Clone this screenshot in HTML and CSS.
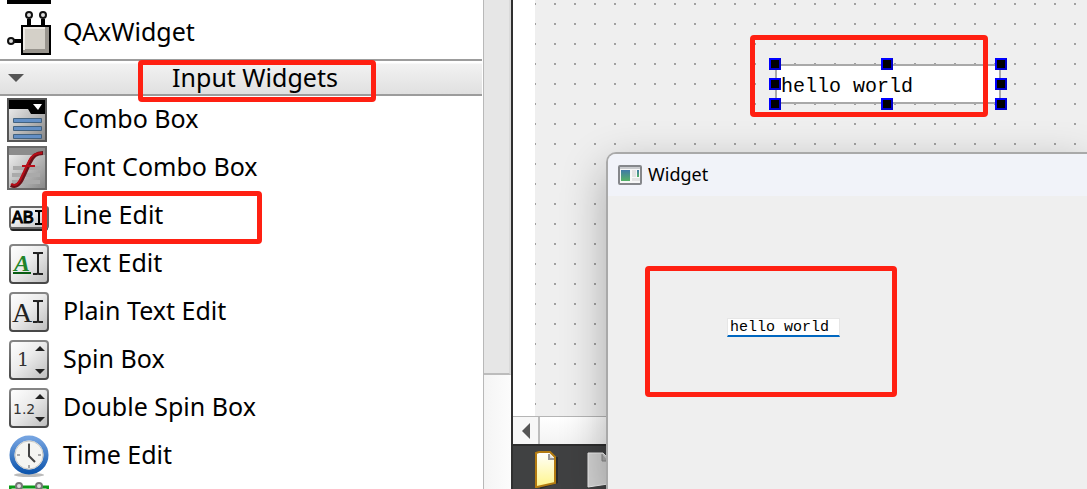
FILE: index.html
```html
<!DOCTYPE html>
<html lang="en">
<head>
<meta charset="utf-8">
<title>Widget designer</title>
<link rel="stylesheet" href="styles.css">
</head>
<body>
<svg class="defs" width="0" height="0" aria-hidden="true">
  <defs>
    <linearGradient id="tile" x1="0" y1="0" x2="1" y2="1"><stop offset="0" stop-color="#fff"/><stop offset=".45" stop-color="#ececec"/><stop offset="1" stop-color="#bcbcbc"/></linearGradient>
    <linearGradient id="edge" x1="0" y1="0" x2="0" y2="1"><stop offset="0" stop-color="#858585"/><stop offset="1" stop-color="#484848"/></linearGradient>
    <linearGradient id="panel" x1="0" y1="0" x2="1" y2="1"><stop offset="0" stop-color="#f8f8f8"/><stop offset="1" stop-color="#858585"/></linearGradient>
    <linearGradient id="ring" x1="0" y1="0" x2="0" y2="1"><stop offset="0" stop-color="#74a3e0"/><stop offset="1" stop-color="#1057ae"/></linearGradient>
    <linearGradient id="paper" x1="0" y1="0" x2="0" y2="1"><stop offset="0" stop-color="#fff"/><stop offset="1" stop-color="#fff58a"/></linearGradient>
    <linearGradient id="pane" x1="0" y1="0" x2="0" y2="1"><stop offset="0" stop-color="#3f79a8"/><stop offset="1" stop-color="#55b265"/></linearGradient>
  </defs>
</svg>
<div class="designer">
  <aside class="widget-box">
    <nav class="list">
      <button class="item item-cut" type="button" aria-label="Previous widget">
        <svg class="icon" width="44" height="4"><rect width="44" height="4"/></svg>
      </button>
      <button class="item" type="button">
        <svg class="icon" width="44" height="44" viewBox="0 0 44 44">
          <path d="M22 8v8M36 8v8M7 30h8" stroke="#000" stroke-width="4"/>
          <g fill="#ddd" stroke="#111" stroke-width="2"><circle cx="22" cy="4" r="3"/><circle cx="36" cy="4" r="3"/><circle cx="4" cy="30" r="3"/></g>
          <rect x="15" y="15" width="28" height="28" fill="#d4d0c8" stroke="#000" stroke-width="2"/>
          <path d="M16 40h24V16" fill="none" stroke="#99958e" stroke-width="4"/>
          <path d="M17 39V17h21" fill="none" stroke="#eeeae5" stroke-width="2"/>
        </svg>
        <span>QAxWidget</span>
      </button>
      <button class="category" type="button" aria-expanded="true">
        <svg class="chevron" width="16" height="8"><path d="M0 0h16L8 8z" fill="#555"/></svg>
        <span>Input Widgets</span>
      </button>
      <button class="item" type="button">
        <svg class="icon" width="44" height="44" viewBox="0 0 44 44">
          <rect x="1" y="1" width="38" height="42" fill="url(#panel)" stroke="#555" stroke-width="2"/>
          <path d="M2 2h36v14H24l-3-5H2z"/><path d="M26 6h9l-4 6z" fill="#fff"/>
          <g fill="#638fc5" stroke="#43627f"><path d="M6.500 20.500h28v4h-28zM6.500 28.500h28v4h-28zM6.500 36.500h28v4h-28z"/></g>
        </svg>
        <span>Combo Box</span>
      </button>
      <button class="item" type="button">
        <svg class="icon" width="44" height="44" viewBox="0 0 44 44">
          <rect x="1" y="1" width="38" height="42" fill="url(#panel)" stroke="#686868" stroke-width="2"/>
          <path d="M2 2h36v7H2z" fill="#8c8c8c"/>
          <path d="M6 22h28M5 29h28M5 36h28" stroke="#aaa" stroke-width="4"/>
          <path d="M4 39c5 3 9-1 12-8l7-15c3-6 6-9 13-9" fill="none" stroke="#6c1118" stroke-width="4"/>
          <path d="M4 38c5 3 8-1 11-8l7-15c3-6 6-8 13-8M15 20h13" fill="none" stroke="#b80e19" stroke-width="2"/>
        </svg>
        <span>Font Combo Box</span>
      </button>
      <button class="item" type="button">
        <svg class="icon tile" width="40" height="44" viewBox="0 0 40 44">
          <rect x="1" y="17" width="38" height="20" rx="3" fill="#222"/>
          <rect x="1" y="13" width="38" height="21" rx="2" fill="url(#tile)" stroke="#666" stroke-width="2"/>
          <text x="3" y="29" class="glyph-pixel">AB</text>
          <path d="M26 17h3l1 1 1-1h3M30 18v11M26 30h3l1-1 1 1h3" fill="none" stroke="#000" stroke-width="2"/>
        </svg>
        <span>Line Edit</span>
      </button>
      <button class="item" type="button">
        <svg class="icon tile" width="40" height="40" viewBox="0 0 40 40">
          <rect x="1" y="1" width="38" height="38" rx="3" fill="url(#tile)" stroke="url(#edge)" stroke-width="2"/>
          <text x="5" y="27" class="glyph-rich">A</text>
          <path d="M4 29h18" stroke="#075c12" stroke-width="2"/>
          <path d="M24 9h4l1 1 1-1h4M29 10v19M24 30h4l1-1 1 1h4" fill="none" stroke="#222" stroke-width="2"/>
        </svg>
        <span>Text Edit</span>
      </button>
      <button class="item" type="button">
        <svg class="icon tile" width="40" height="40" viewBox="0 0 40 40">
          <rect x="1" y="1" width="38" height="38" rx="3" fill="url(#tile)" stroke="url(#edge)" stroke-width="2"/>
          <text x="3" y="30" class="glyph-plain">A</text>
          <path d="M24 9h4l1 1 1-1h4M29 10v19M24 30h4l1-1 1 1h4" fill="none" stroke="#222" stroke-width="2"/>
        </svg>
        <span>Plain Text Edit</span>
      </button>
      <button class="item" type="button">
        <svg class="icon tile" width="40" height="40" viewBox="0 0 40 40">
          <rect x="1" y="1" width="38" height="38" rx="3" fill="url(#tile)" stroke="url(#edge)" stroke-width="2"/>
          <text x="8" y="26" class="glyph-number">1</text>
          <path d="M26 11l5-5 5 5zM26 29h10l-5 5z" fill="#222"/>
        </svg>
        <span>Spin Box</span>
      </button>
      <button class="item" type="button">
        <svg class="icon tile" width="40" height="40" viewBox="0 0 40 40">
          <rect x="1" y="1" width="38" height="38" rx="3" fill="url(#tile)" stroke="url(#edge)" stroke-width="2"/>
          <text x="4" y="26" class="glyph-decimal">1.2</text>
          <path d="M26 11l5-5 5 5zM26 29h10l-5 5z" fill="#222"/>
        </svg>
        <span>Double Spin Box</span>
      </button>
      <button class="item" type="button">
        <svg class="icon tile" width="40" height="44" viewBox="0 0 40 44">
          <ellipse cx="20" cy="41" rx="15" ry="2" fill="#bbb"/>
          <circle cx="20" cy="21" r="17" fill="#f5f5f2" stroke="url(#ring)" stroke-width="5"/>
          <circle cx="20" cy="21" r="14" fill="none" stroke="#c8c8c4"/>
          <path d="M20 9v3M20 31v3M8 21h3M29 21h3" stroke="#aaa" stroke-width="2"/>
          <path d="M20 10v12l6 6" fill="none" stroke="#444" stroke-width="2"/>
        </svg>
        <span>Time Edit</span>
      </button>
      <button class="item item-next" type="button" aria-label="Next widget">
        <svg class="icon tile" width="40" height="40" viewBox="0 0 40 40">
          <rect x="1" y="5" width="38" height="34" fill="#fff" stroke="#0a9a16" stroke-width="3"/>
          <g fill="#ddd" stroke="#777" stroke-width="2"><circle cx="10" cy="4" r="3"/><circle cx="30" cy="4" r="3"/></g>
        </svg>
      </button>
    </nav>
    <div class="vscroll"><div class="thumb"></div></div>
    <div class="mark mark-category"></div>
    <div class="mark mark-line-edit"></div>
  </aside>
  <main class="editor">
    <section class="form">
      <div class="selection">
        <input class="form-input" type="text" value="hello world" aria-label="Line edit">
        <i class="handle top left"></i><i class="handle top center"></i><i class="handle top right"></i>
        <i class="handle middle left"></i><i class="handle middle right"></i>
        <i class="handle bottom left"></i><i class="handle bottom center"></i><i class="handle bottom right"></i>
      </div>
      <div class="mark mark-selection"></div>
    </section>
    <div class="hscroll">
      <button class="scroll-left" type="button" aria-label="Scroll left"><svg width="8" height="16"><path d="M8 0v16L0 8z" fill="#555"/></svg></button>
      <div class="track"></div>
    </div>
    <footer class="toolbar">
      <svg width="24" height="38" viewBox="0 0 24 38"><path d="M6 6h17v26L5 38z" fill="#292a2b"/><path d="M1 2l3-1h11l5 5v26L2 36H1z" fill="url(#paper)" stroke="#b37b10" stroke-width="2"/><path d="M14 3v5h5" fill="#ddd" stroke="#999" stroke-width="2"/></svg>
      <svg width="24" height="38" viewBox="0 0 24 38"><path d="M1 2h15l5 5v26L1 36z" fill="#d2d2d2" stroke="#eee"/><path d="M15 3v7h6" fill="#aaa" stroke="#888"/></svg>
    </footer>
    <section class="preview">
      <header class="titlebar">
        <svg width="24" height="20" viewBox="0 0 24 20"><rect x="1" y="1" width="22" height="18" rx="1" fill="#f7f7f7" stroke="#85878b" stroke-width="2"/><path d="M2 3h20" stroke="#c9cbce" stroke-width="2"/><path d="M3 5h9v11H3z" fill="url(#pane)"/><path d="M14 5h4v7h-4zM14 13h8v3h-8z" fill="#e3e3e3"/><path d="M19 5h2v7h-2z" fill="url(#pane)"/></svg>
        <span>Widget</span>
      </header>
      <div class="preview-body">
        <input class="preview-input" type="text" value="hello world" aria-label="Preview line edit">
        <div class="mark mark-preview"></div>
      </div>
    </section>
  </main>
</div>
</body>
</html>
```
FILE: styles.css
```css
* { box-sizing: border-box; }
body { margin: 0; font-family: "Segoe UI", "Noto Sans", sans-serif; color: #000; background: #fff; }
button { margin: 0; padding: 0; border: 0; background: none; font: inherit; color: inherit; text-align: left; }
.defs { position: absolute; }
.designer { display: flex; height: 100vh; overflow: hidden; }

.widget-box { position: relative; display: flex; flex: 0 0 513px; border-right: 2px solid #303030; }
.list { display: flex; flex: 1; flex-direction: column; min-width: 0; overflow: hidden; }
.item { display: flex; flex: 0 0 48px; align-items: center; gap: 12px; padding-left: 7px; font-size: 25px; line-height: 34px; }
.item span { padding-bottom: 4px; white-space: nowrap; }
.icon { flex: none; }
.tile { margin: 0 2px; }
.item-cut { flex-basis: 9px; align-items: flex-start; }
.item-next { align-items: flex-start; padding-top: 2px; }
.category { display: flex; flex: 0 0 37px; align-items: center; margin: 2px 1px 0 0; padding-left: 8px; border-top: 2px solid #9c9c9c; border-bottom: 2px solid #9c9c9c; background: linear-gradient(#fff 2px, #f2f2f2 3px, #e0e0e0); font-size: 25px; line-height: 30px; }
.category span { flex: 1; padding: 0 0 2px 4px; text-align: center; }
.vscroll { flex: 0 0 28px; border-left: 1px solid #b8b8b8; background: linear-gradient(90deg, #f4f4f4, #fcfcfc); }
.thumb { height: 375px; border-right: 2px solid #dadada; border-bottom: 2px solid #bcbcbc; background: #e6e6e6; }

.mark { position: absolute; border: 5px solid #ff2012; border-radius: 4px; pointer-events: none; }
.mark-category { left: 138px; top: 60px; width: 238px; height: 42px; }
.mark-line-edit { left: 42px; top: 191px; width: 220px; height: 53px; }
.mark-selection { left: 215px; top: 35px; width: 238px; height: 82px; }
.mark-preview { left: 37px; top: 70px; width: 252px; height: 131px; }

.editor { position: relative; display: flex; flex: 1; flex-direction: column; min-width: 0; overflow: hidden; }
.form { position: relative; flex: 1; margin-left: 22px; background: conic-gradient(from 270deg at 2px 2px, #a0a0a0 90deg, transparent 0) 19px 3px / 20px 20px, #efefef; }
.selection { position: absolute; left: 240px; top: 64px; width: 226px; height: 40px; }
.form-input { width: 100%; height: 100%; padding: 4px 4px 0; border: 2px solid #a9a9a9; outline: 0; background: #fff; color: #000; font: 20px "Liberation Mono", monospace; }
.handle { position: absolute; width: 12px; height: 12px; border: 2px solid #00f; border-right-color: #00c; border-bottom-color: #00c; background: #000; }
.top { top: -6px; }
.middle { top: 14px; }
.bottom { bottom: -6px; }
.left { left: -6px; }
.center { left: 106px; }
.right { right: -6px; }

.hscroll { display: flex; flex: 0 0 28px; border-top: 1px solid #b5b5b5; background: #f7f7f7; }
.scroll-left { display: flex; flex: 0 0 27px; align-items: center; justify-content: center; border-right: 2px solid #bdbdbd; }
.track { flex: 1; background: linear-gradient(#fff, #f3f3f3); }
.toolbar { display: flex; flex: 0 0 45px; gap: 28px; min-height: 0; padding: 5px 22px 0; overflow: hidden; border-top: 2px solid #2d2d2d; background: #404142; }

.preview { position: absolute; left: 93px; right: 0; top: 152px; bottom: 0; display: flex; flex-direction: column; overflow: hidden; border: solid #a9a9a9; border-width: 2px 0 0 2px; border-radius: 10px 0 0; background: #efefef; box-shadow: 0 16px 45px rgb(0 0 0 / 30%); }
.titlebar { display: flex; flex: 0 0 42px; align-items: center; gap: 6px; padding-left: 10px; background: #f1f3f9; font-size: 18px; line-height: 24px; }
.titlebar span { padding-bottom: 2px; }
.preview-body { position: relative; flex: 1; padding: 122px 0 0 119px; }
.preview-input { display: block; width: 113px; height: 19px; padding: 0 2px; border: 1px solid #e6e6e6; border-bottom: 2px solid #0067c0; outline: 0; background: #fff; color: #000; font: 15px "Liberation Mono", monospace; }

.glyph-pixel { font: 18px "Liberation Mono", monospace; stroke: #000; stroke-width: 1px; }
.glyph-rich { font: italic bold 24px "Liberation Serif", serif; fill: #218429; }
.glyph-plain { font: 28px "Liberation Serif", serif; fill: #222; }
.glyph-number { font: 19px "DejaVu Serif", serif; fill: #333; }
.glyph-decimal { font: 14px "DejaVu Sans", sans-serif; fill: #333; }
```
